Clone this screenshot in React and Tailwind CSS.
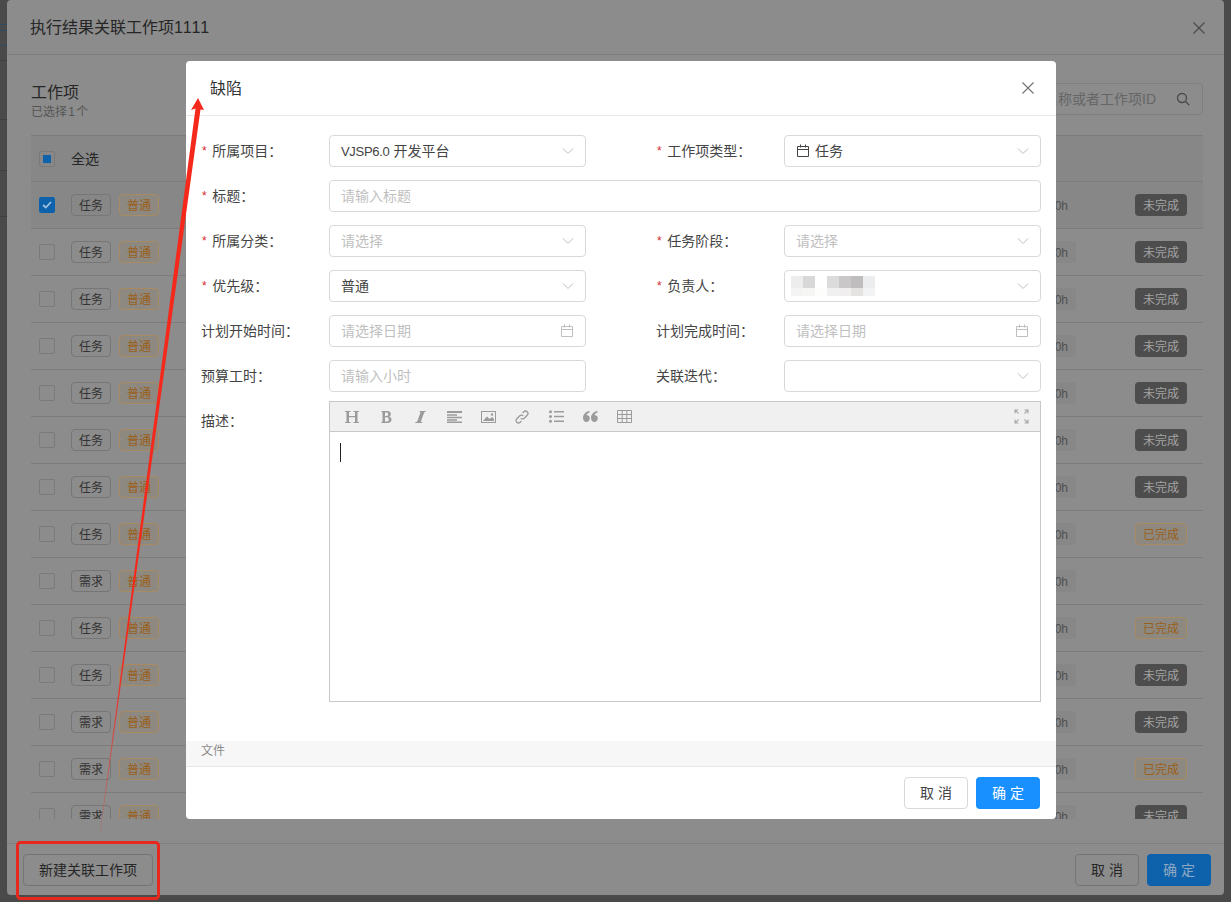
import React from "react";

const font = "[font-family:'Liberation_Sans','Noto_Sans_CJK_SC',sans-serif]";

const Chevron = () => (
  <svg width="12" height="8" viewBox="0 0 12 8" fill="none" stroke="#bfbfbf" strokeWidth="1"><path d="M1 1.500 6 6.500 11 1.500" /></svg>
);
const Calendar = ({ color = "#bfbfbf" }) => (
  <svg width="14" height="14" viewBox="0 0 14 14" fill="none" stroke={color} strokeWidth="1"><path d="M1.500 2.500h11v10h-11zM1.500 5.500h11M4.500 .5v3M9.500 .5v3" /></svg>
);
const Close = ({ color = "#777" }) => (
  <svg width="14" height="14" viewBox="0 0 14 14" fill="none" stroke={color} strokeWidth="1.200"><path d="M1.500 1.500 12.500 12.500M12.500 1.500 1.500 12.500" /></svg>
);

const ic = "#9b9b9b";
const ToolIcons = [
  <svg key="h" width="14" height="12" viewBox="0 0 14 12" fill={ic}><path d="M0 0h5.500v1H4v4h6V1H8.500V0H14v1h-1.500v10H14v1H8.500v-1H10V6.200H4V11h1.500v1H0v-1h1.500V1H0z" /></svg>,
  <svg key="b" width="11" height="12" viewBox="0 0 10 12" fill={ic}><path fillRule="evenodd" d="M0 0h5.500C8 0 9.300 1.300 9.300 3c0 1.300-.7 2.200-1.800 2.600C9 6 10 7.100 10 8.600 10 10.600 8.500 12 6 12H0v-1.200h1V1.200H0zM3.500 1.500v3.500h1.600c1 0 1.600-.7 1.600-1.800s-.6-1.700-1.600-1.700zM3.500 6.300v4.200h1.900c1.200 0 1.900-.8 1.900-2.100S6.600 6.300 5.400 6.300z" /></svg>,
  <svg key="i" width="11" height="12" viewBox="0 0 11 12" fill={ic}><path d="M4.500 0H11v.6c-1 .2-1.600.5-2 1.400L6 10c-.2.700.2 1 1.200 1.200v.8H0v-.6c1.200-.2 2-.6 2.400-1.500L5.300 2C5.600 1.200 5.200.9 4.400.8z" /></svg>,
  <svg key="a" width="15" height="12" viewBox="0 0 15 12" fill={ic}><path d="M0 0h15v2H0zM0 3.300h10v1.400H0zM0 5.700h15v1.600H0zM0 8.300h10v1.400H0zM0 10.500h15V12H0z" /></svg>,
  <svg key="p" width="15" height="12" viewBox="0 0 15 12"><rect x=".5" y=".5" width="14" height="11" fill="none" stroke={ic} /><path d="M2 10 6 5.500l2.500 2.500 2.500-2 2 2v2z" fill={ic} /><circle cx="11" cy="3.500" r="1.200" fill={ic} /></svg>,
  <svg key="l" width="14" height="14" viewBox="0 0 14 14" fill="none" stroke={ic} strokeWidth="1.300"><path d="M5.800 8.200a2.400 2.400 0 0 0 3.400 0l3-3a2.400 2.400 0 0 0-3.400-3.400L7.600 3" /><path d="M8.200 5.800a2.400 2.400 0 0 0-3.400 0l-3 3a2.400 2.400 0 0 0 3.400 3.400L6.400 11" /></svg>,
  <svg key="u" width="15" height="13" viewBox="0 0 15 13" fill={ic}><circle cx="1.500" cy="1.800" r="1.500" /><circle cx="1.500" cy="6.500" r="1.500" /><circle cx="1.500" cy="11.200" r="1.500" /><path d="M5 1h10v1.600H5zM5 5.700h10v1.600H5zM5 10.400h10V12H5z" /></svg>,
  <svg key="q" width="15" height="11" viewBox="0 0 15 11" fill={ic}><path d="M6.500 0v1.500C4.800 2 3.900 3 3.700 4.200 5.400 4 6.800 5.300 6.800 7.300 6.800 9.400 5.300 11 3.400 11 1.300 11 0 9.300 0 7 0 3.500 2.500.6 6.500 0zM14.500 0v1.500c-1.700.5-2.600 1.500-2.800 2.700 1.700-.2 3.100 1.100 3.100 3.100 0 2.100-1.500 3.700-3.400 3.700C9.300 11 8 9.300 8 7c0-3.500 2.500-6.400 6.500-7z" /></svg>,
  <svg key="t" width="15" height="13" viewBox="0 0 15 13" fill="none" stroke={ic}><path d="M.5.500h14v12H.5zM.5 4.500h14M.5 8.500h14M5.200.5v12M9.800.5v12" /></svg>,
];

const rows = [
  ["任务", "未完成", true], ["任务", "未完成"], ["任务", "未完成"], ["任务", "未完成"], ["任务", "未完成"], ["任务", "未完成"], ["任务", "未完成"],
  ["任务", "已完成"], ["需求", ""], ["任务", "已完成"], ["任务", "未完成"], ["需求", "未完成"], ["需求", "已完成"], ["需求", "未完成"],
];

function Row({ type, status, checked }) {
  return (
    <div className={`flex h-[47px] shrink-0 items-center border-b border-[#7c7c7c] pl-2 pr-4 ${checked ? "bg-[#878787]" : ""}`}>
      {checked ? (
        <span className="flex h-4 w-4 items-center justify-center rounded-[2px] bg-[#0e62ac]">
          <svg width="10" height="8" viewBox="0 0 10 8" fill="none" stroke="#9ec0dd" strokeWidth="1.800"><path d="M1 4 3.800 6.500 9 1" /></svg>
        </span>
      ) : (
        <span className="h-4 w-4 rounded-[2px] border border-[#7a7a7a]" />
      )}
      <span className="ml-4 flex h-[22px] w-10 items-center justify-center rounded-[4px] border border-[#767676] pt-[2px] text-xs text-[#333]">{type}</span>
      <span className="ml-2 flex h-[22px] w-10 items-center justify-center rounded-[4px] border border-[#a88a63] bg-[#8e8980] pt-[2px] text-xs text-[#9a5f1a]">普通</span>
      <span className="ml-auto flex h-[22px] items-center rounded-[4px] bg-[#878787] px-2 pt-[2px] text-xs text-[#4f4f4f]">0h</span>
      <span className="ml-[59px] w-[52px]">
        {status === "未完成" && <span className="flex h-[22px] items-center justify-center rounded-[4px] bg-[#4d4d4d] pt-[2px] text-xs text-[#a3a3a3]">未完成</span>}
        {status === "已完成" && <span className="flex h-[22px] items-center justify-center rounded-[4px] border border-[#a88a63] bg-[#8e8980] pt-[2px] text-xs text-[#9a5f1a]">已完成</span>}
      </span>
    </div>
  );
}

const Label = ({ req, children }) => (
  <label className="flex w-[128px] shrink-0 items-center text-sm text-[#444]">
    {req && <span className="mr-[5.500px] ml-[1px] text-xs text-[#d4282d]">*</span>}
    {children}：
  </label>
);
const Box = ({ children, className = "" }) => (
  <div className={`flex h-8 min-w-0 flex-1 items-center rounded-[4px] border border-[#d9d9d9] bg-white pl-[11px] pr-[11px] text-sm ${className}`}>{children}</div>
);
const Select = ({ label, req, value, ph }) => (
  <div className="flex">
    <Label req={req}>{label}</Label>
    <Box>
      {value ? <span className="text-[#444]">{value}</span> : <span className="text-[#bfbfbf]">{ph}</span>}
      <span className="ml-auto flex"><Chevron /></span>
    </Box>
  </div>
);
const DateInput = ({ label }) => (
  <div className="flex">
    <Label>{label}</Label>
    <Box>
      <span className="text-[#bfbfbf]">请选择日期</span>
      <span className="ml-auto flex"><Calendar /></span>
    </Box>
  </div>
);

const mosaicTop = ["#ededed", "#d8d8d8", "#ffffff", "#dcdbdb", "#c9c7c7", "#bfbdbd", "#ecedef"];
const mosaicBottom = ["#f4f4f4", "#f6f6f4", "#fdfdfb", "#f0f0f0", "#f0eeee", "#e4e3e1", "#f2f3f5"];
const stripLines = ["top-[60px]", "top-[119px]", "top-[170px]", "top-[216px]"];

export default function App() {
  return (
    <div className={`relative h-[902px] w-[1231px] overflow-hidden bg-[#4a4a4a] ${font}`}>
      {/* sliver of the page behind the dialog */}
      <div className="absolute left-0 top-[24px] h-[22px] w-[7px] border-y border-[#2f4a63]">
        <div className="mt-[5px] h-px w-full bg-[#2f4a63]" />
      </div>
      {stripLines.map((c) => <div key={c} className={`absolute left-0 h-px w-[7px] bg-[#3e3e3e] ${c}`} />)}

      <div className="relative h-[895px] pl-[7px] pr-[7px]">
        <div className="flex h-full flex-col rounded-[4px] bg-[#8c8c8c]">
          <div className="flex h-[55px] shrink-0 items-center justify-between border-b border-[#7f7f7f] pl-[23px] pr-[18px] pt-[2px]">
            <span className="text-base text-[#262626]">执行结果关联工作项<span className="tracking-[1px]">1111</span></span>
            <Close color="#4a4a4a" />
          </div>
          <div className="flex min-h-0 flex-1 flex-col pl-6 pr-[21px]">
            <div className="flex h-[80px] shrink-0 items-start justify-between pt-[25px]">
              <div className="pt-[2px]">
                <div className="text-base leading-[22px] text-[#262626]">工作项</div>
                <div className="text-xs leading-4 text-[#555] [word-spacing:-2px]">已选择 1 个</div>
              </div>
              <div className="mt-[3px] flex h-8 items-center rounded-[4px] border border-[#7f7f7f] pl-3 pr-[12px] text-sm text-[#666]">
                请输入名称或者工作项ID
                <svg className="ml-5" width="14" height="14" viewBox="0 0 14 14" fill="none" stroke="#4a4a4a" strokeWidth="1.300"><circle cx="6" cy="6" r="4.500" /><path d="m9.300 9.300 4 4" /></svg>
              </div>
            </div>
            <div className="flex h-[47px] shrink-0 items-center border-y border-[#7c7c7c] bg-[#878787] pl-2">
              <span className="flex h-4 w-4 items-center justify-center rounded-[2px] border border-[#7a7a7a]">
                <span className="h-2 w-2 bg-[#0e62ac]" />
              </span>
              <span className="ml-4 text-sm text-[#262626]">全选</span>
            </div>
            <div className="flex h-[637px] shrink-0 flex-col overflow-hidden">
              {rows.map((r, i) => <Row key={i} type={r[0]} status={r[1]} checked={r[2]} />)}
            </div>
          </div>
          <div className="flex h-[52px] shrink-0 items-center border-t border-[#7f7f7f] pl-4 pr-[13px]">
            <button className="h-8 w-[130px] rounded-[4px] border border-[#757575] text-sm text-[#262626]">新建关联工作项</button>
            <button className="ml-auto h-8 w-16 rounded-[4px] border border-[#757575] text-sm text-[#262626]">取 消</button>
            <button className="ml-2 h-8 w-16 rounded-[4px] bg-[#0e62ac] text-sm text-[#8fa9c2]">确 定</button>
          </div>
        </div>
      </div>

      {/* inner dialog */}
      <div className="absolute left-[186px] top-[61px] flex h-[758px] w-[870px] flex-col rounded-[4px] bg-white">
        <div className="flex h-[55px] shrink-0 items-center justify-between border-b border-[#e8e8e8] pl-6 pr-[21px]">
          <span className="pt-[2px] text-base text-[#333]">缺陷</span>
          <Close color="#777" />
        </div>
        <div className="min-h-0 flex-1 px-[15px] pt-[19px]">
          <div className="grid grid-cols-2 gap-x-[70px] gap-y-[13px]">
            <Select req label="所属项目" value={<><span className="text-[13px] tracking-[-0.3px]">VJSP6.0</span> 开发平台</>} />
            <div className="flex">
              <Label req>工作项类型</Label>
              <Box>
                <Calendar color="#444" />
                <span className="ml-[5px] text-[#444]">任务</span>
                <span className="ml-auto flex"><Chevron /></span>
              </Box>
            </div>
            <div className="col-span-2 flex">
              <Label req>标题</Label>
              <Box><span className="text-[#bfbfbf]">请输入标题</span></Box>
            </div>
            <Select req label="所属分类" ph="请选择" />
            <Select req label="任务阶段" ph="请选择" />
            <Select req label="优先级" value="普通" />
            <div className="flex">
              <Label req>负责人</Label>
              <Box className="relative">
                <span className="ml-auto flex"><Chevron /></span>
                <div className="absolute left-[6px] top-[5px] flex flex-col">
                  <div className="flex">{mosaicTop.map((c, i) => <span key={i} className="h-3 w-3" style={{ background: c }} />)}</div>
                  <div className="flex">{mosaicBottom.map((c, i) => <span key={i} className="h-2 w-3" style={{ background: c }} />)}</div>
                </div>
              </Box>
            </div>
            <DateInput label="计划开始时间" />
            <DateInput label="计划完成时间" />
            <div className="flex">
              <Label>预算工时</Label>
              <Box><span className="text-[#bfbfbf]">请输入小时</span></Box>
            </div>
            <Select label="关联迭代" />
          </div>
          <div className="mt-[9px] flex">
            <label className="w-[128px] shrink-0 pt-[10px] text-sm text-[#444]">描述：</label>
            <div className="flex h-[301px] flex-1 flex-col border border-[#c8c8c8]">
              <div className="flex h-[30px] shrink-0 items-center border-b border-[#c8c8c8] bg-[#f0f0f0] pl-[5px] pr-[11px]">
                {ToolIcons.map((icon, i) => <span key={i} className="flex w-[34px] justify-center">{icon}</span>)}
                <svg className="ml-auto" width="15" height="15" viewBox="0 0 15 15" fill="none" stroke="#a8a8a8" strokeWidth="1.100"><path d="M1 4.500V1h3.500M1 1l3.500 3.500M10.500 1H14v3.500M14 1l-3.500 3.500M1 10.500V14h3.500M1 14l3.500-3.500M14 10.500V14h-3.500M14 14l-3.500-3.500" /></svg>
              </div>
              <div className="flex-1 pl-[10px] pt-[11px]">
                <div className="h-[19px] w-px bg-[#222]" />
              </div>
            </div>
          </div>
        </div>
        <div className="flex h-[26px] shrink-0 items-center border-b border-[#e8e8e8] bg-[#f7f7f7] pb-[6px] pl-[15px] text-xs text-[#8c8c8c]">文件</div>
        <div className="flex h-[52px] shrink-0 items-center justify-end gap-2 pr-4">
          <button className="h-8 w-16 rounded-[4px] border border-[#d9d9d9] text-sm text-[#444]">取 消</button>
          <button className="h-8 w-16 rounded-[4px] bg-[#1890ff] text-sm text-white">确 定</button>
        </div>
      </div>

      {/* screenshot annotations */}
      <svg className="pointer-events-none absolute left-0 top-0" width="1231" height="902" fill="none">
        <defs>
          <linearGradient id="fade" x1="0" y1="98" x2="0" y2="835" gradientUnits="userSpaceOnUse">
            <stop offset="0" stopColor="#f5281c" />
            <stop offset="0.75" stopColor="#f5281c" />
            <stop offset="1" stopColor="#f5281c" stopOpacity="0.25" />
          </linearGradient>
        </defs>
        <path d="M198 98 204 110 200.500 109.500 100.300 833 99.800 833 195.500 108.500 191 110Z" fill="url(#fade)" />
        <rect x="17.500" y="842.500" width="141" height="56" rx="3" stroke="#e8281c" strokeWidth="3" />
      </svg>
    </div>
  );
}
